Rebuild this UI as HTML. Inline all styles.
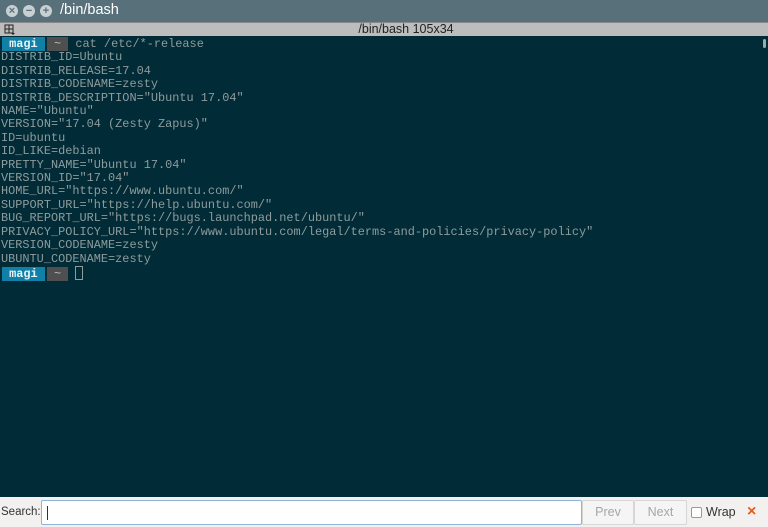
<!DOCTYPE html>
<html><head><meta charset="utf-8"><style>
*{margin:0;padding:0;box-sizing:border-box}
body{width:768px;height:527px;overflow:hidden;background:#f2f1f0;font-family:"Liberation Sans",sans-serif;position:relative}
#title{position:absolute;left:0;top:0;width:768px;height:22px;background:#57707a;}
.btn{position:absolute;top:5px;width:12px;height:12px;border-radius:50%;background:#c9d0d3;color:#57707a;font-size:11px;line-height:12px;text-align:center;font-weight:bold}
#ttl{position:absolute;left:60px;top:2px;color:#fff;font-size:14.5px}
#tabs{position:absolute;left:0;top:22px;width:768px;height:14px;background:#bdbdbd;border-top:1px solid #888}
#tabs .t{position:absolute;left:22px;width:768px;text-align:center;top:-1px;font-size:12.5px;color:#222}
#term{position:absolute;left:0;top:36px;width:768px;height:461px;background:#012b37;}
pre{position:absolute;left:1px;top:2px;font-family:"Liberation Mono",monospace;font-size:11.9px;line-height:13.4px;color:#8e9c9c}
.m{background:#1180a6;color:#e8f4f8;font-weight:bold;margin-left:1px}
.h{background:#4f4f4f;color:#bbb;margin-left:2px}
.cur{display:inline-block;width:8px;height:14px;border:1px solid #8e9c9c;vertical-align:-3px}
#sb{position:absolute;left:763px;top:3px;width:3px;height:9px;background:#9aa;border-radius:2px}
#search{position:absolute;left:0;top:497px;width:768px;height:30px;background:#f2f1f0;font-size:12.5px;color:#333}
#inp{position:absolute;left:41px;top:3px;width:541px;height:25px;background:#fff;border:1px solid #8fb4d8;border-radius:2px}
#inp:after{content:"";position:absolute;left:5px;top:5px;width:1px;height:14px;background:#333}
.b{position:absolute;top:3px;height:25px;border:1px solid #d6d6d6;background:#f5f5f5;color:#a6a6a6;text-align:center;line-height:23px;border-radius:2px}
</style></head><body>
<div id="title">
<div class="btn" style="left:6px">×</div>
<div class="btn" style="left:23px">−</div>
<div class="btn" style="left:40px">+</div>
<div id="ttl">/bin/bash</div>
</div>
<div id="tabs">
<svg style="position:absolute;left:4px;top:1px" width="12" height="12" viewBox="0 0 12 12"><path d="M1 1h8v8H1zM5 1v8M1 5h8" fill="none" stroke="#222"/><path d="M7 9h4l-2 2z" fill="#222"/></svg>
<div class="t">/bin/bash 105x34</div>
</div>
<div id="term">
<pre><span class="m"> magi </span><span class="h"> ~ </span> cat /etc/*-release
DISTRIB_ID=Ubuntu
DISTRIB_RELEASE=17.04
DISTRIB_CODENAME=zesty
DISTRIB_DESCRIPTION="Ubuntu 17.04"
NAME="Ubuntu"
VERSION="17.04 (Zesty Zapus)"
ID=ubuntu
ID_LIKE=debian
PRETTY_NAME="Ubuntu 17.04"
VERSION_ID="17.04"
HOME_URL="https://www.ubuntu.com/"
SUPPORT_URL="https://help.ubuntu.com/"
BUG_REPORT_URL="https://bugs.launchpad.net/ubuntu/"
PRIVACY_POLICY_URL="https://www.ubuntu.com/legal/terms-and-policies/privacy-policy"
VERSION_CODENAME=zesty
UBUNTU_CODENAME=zesty
<span class="m"> magi </span><span class="h"> ~ </span> <span class="cur"></span></pre>
<div id="sb"></div>
</div>
<div id="search">
<span style="position:absolute;left:1px;top:9px;font-size:11.5px">Search:</span>
<div id="inp"></div>
<div class="b" style="left:582px;width:52px">Prev</div>
<div class="b" style="left:634px;width:53px">Next</div>
<span style="position:absolute;left:691px;top:10px;width:11px;height:11px;border:1px solid #999;background:#fff;border-radius:2px"></span>
<span style="position:absolute;left:706px;top:8px">Wrap</span>
<span style="position:absolute;left:747px;top:6px;color:#e65c1c;font-weight:bold;font-size:16px">×</span>
</div>
</body></html>
